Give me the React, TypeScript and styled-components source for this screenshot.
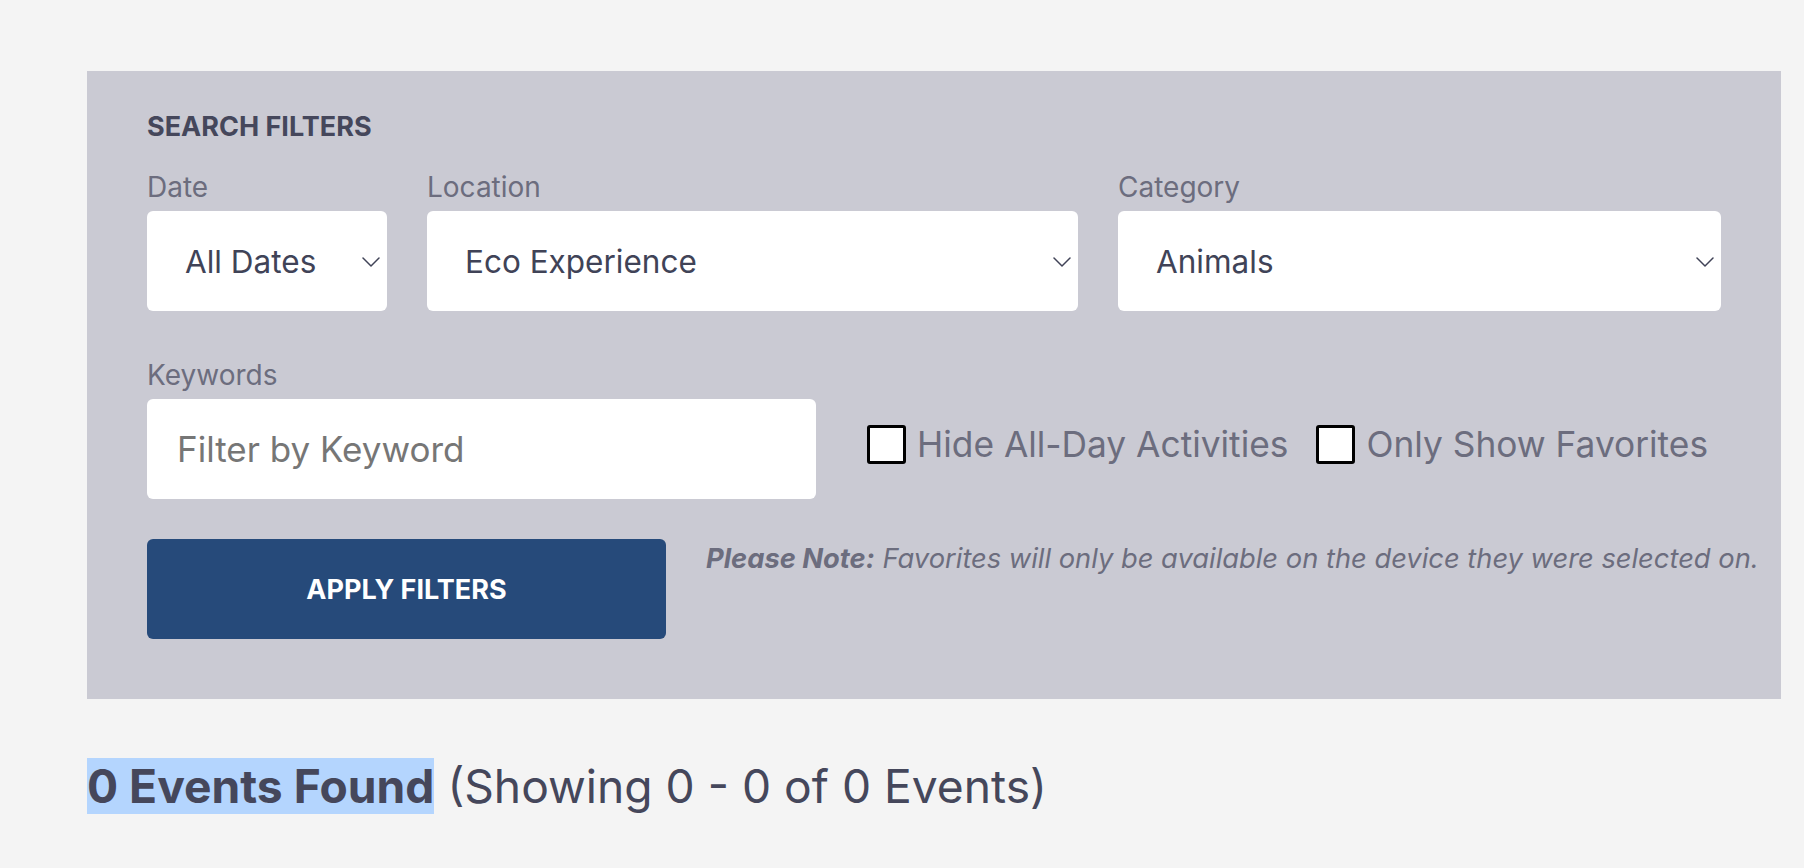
import React from 'react';
import styled, { createGlobalStyle } from 'styled-components';

const GlobalStyle = createGlobalStyle`
  * {
    box-sizing: border-box;
  }

  body {
    margin: 0;
    background: #f4f4f4;
    font-family: 'Inter', 'Liberation Sans', sans-serif;
  }
`;

type SelectProps = {
    label: string;
    value: string;
    options: string[];
};

type CheckProps = {
    label: string;
};

const Chevron = () => (
    <ChevronIcon width="18" height="10" viewBox="0 0 18 10" aria-hidden="true">
        <path d="M1 1 L9 9 L17 1" fill="none" stroke="#404357" strokeWidth="1.5" strokeLinecap="round" strokeLinejoin="round"/>
    </ChevronIcon>
);

const SelectField = ({label, value, options}: SelectProps) => (
    <Field>
        <Label>{label}</Label>
        <SelectWrap>
            <Select defaultValue={value}>
                {options.map((o) => <option key={o}>{o}</option>)}
            </Select>
            <Chevron/>
        </SelectWrap>
    </Field>
);

const CheckOption = ({label}: CheckProps) => (
    <CheckLabel>
        <CheckBox type="checkbox"/>
        <span>{label}</span>
    </CheckLabel>
);

const App = () => {
    return (
        <>
            <GlobalStyle/>
            <Page>
                <FilterPanel>
                    <PanelTitle>SEARCH FILTERS</PanelTitle>
                    <SelectRow>
                        <SelectField label="Date" value="All Dates" options={['All Dates', 'Today', 'This Week']}/>
                        <SelectField label="Location" value="Eco Experience" options={['All Locations', 'Eco Experience']}/>
                        <SelectField label="Category" value="Animals" options={['All Categories', 'Animals']}/>
                    </SelectRow>
                    <KeywordRow>
                        <KeywordField>
                            <Label>Keywords</Label>
                            <TextInput type="text" placeholder="Filter by Keyword"/>
                        </KeywordField>
                        <CheckGroup>
                            <CheckOption label="Hide All-Day Activities"/>
                            <CheckOption label="Only Show Favorites"/>
                        </CheckGroup>
                    </KeywordRow>
                    <ActionRow>
                        <ApplyButton type="button">APPLY FILTERS</ApplyButton>
                        <Note>
                            <strong>Please Note:</strong> Favorites will only be available on the device they were selected on.
                        </Note>
                    </ActionRow>
                </FilterPanel>
                <Results>
                    <Found>0 Events Found</Found> (Showing 0 - 0 of 0 Events)
                </Results>
            </Page>
        </>
    );
};

export default App;

const Page = styled.div`
  padding: 71px 0 40px 87px;
`;

const FilterPanel = styled.section`
  width: 1694px;
  padding: 39px 60px 60px;
  background: #cacad3;
`;

const PanelTitle = styled.h2`
  margin: 0;
  font-size: 27px;
  line-height: 33px;
  font-weight: 700;
  color: #45475b;
`;

const SelectRow = styled.div`
  display: grid;
  grid-template-columns: 240px 651px 1fr;
  column-gap: 40px;
  margin-top: 27px;
`;

const Field = styled.div`
  display: flex;
  flex-direction: column;
`;

const Label = styled.label`
  font-size: 28px;
  line-height: 34px;
  color: #6c6d7e;
  margin-bottom: 7px;
`;

const SelectWrap = styled.div`
  position: relative;
`;

const Select = styled.select`
  appearance: none;
  width: 100%;
  height: 100px;
  padding: 0 40px 0 38px;
  border: none;
  border-radius: 6px;
  background: #fff;
  font-family: 'Inter', 'Liberation Sans', sans-serif;
  font-size: 31.5px;
  color: #404357;
  outline: none;
`;

const ChevronIcon = styled.svg`
  position: absolute;
  right: 7px;
  top: 46px;
  pointer-events: none;
`;

const KeywordRow = styled.div`
  display: flex;
  align-items: flex-end;
  margin-top: 47px;
`;

const KeywordField = styled(Field)`
  width: 669px;
  flex-shrink: 0;
`;

const TextInput = styled.input`
  height: 100px;
  padding: 0 30px;
  border: none;
  border-radius: 6px;
  background: #fff;
  font-family: 'Inter', 'Liberation Sans', sans-serif;
  font-size: 35px;
  color: #404357;
  outline: none;

  &::placeholder {
    color: #767676;
  }
`;

const CheckGroup = styled.div`
  display: flex;
  align-items: center;
  gap: 28px;
  height: 100px;
  padding-bottom: 9px;
  margin-left: 51px;
  white-space: nowrap;
`;

const CheckLabel = styled.label`
  display: flex;
  align-items: center;
  gap: 11px;
  font-size: 35.3px;
  line-height: 44px;
  color: #6c6d7e;
`;

const CheckBox = styled.input`
  appearance: none;
  flex-shrink: 0;
  width: 39px;
  height: 39px;
  margin: 0;
  border: 3.5px solid #000;
  border-radius: 3px;
  background: #fff;
`;

const ActionRow = styled.div`
  display: flex;
  align-items: flex-start;
  gap: 40px;
  margin-top: 40px;
`;

const ApplyButton = styled.button`
  flex-shrink: 0;
  width: 519px;
  height: 100px;
  border: none;
  border-radius: 6px;
  background: #264a7a;
  color: #fff;
  font-family: 'Inter', 'Liberation Sans', sans-serif;
  font-size: 27px;
  font-weight: 700;
  cursor: pointer;
`;

const Note = styled.p`
  margin: 3px 0 0;
  font-size: 27.3px;
  line-height: 33px;
  font-style: italic;
  white-space: nowrap;
  color: #6c6d7e;

  strong {
    font-weight: 700;
  }
`;

const Results = styled.div`
  margin-top: 59px;
  font-size: 46.2px;
  color: #45475b;
`;

const Found = styled.span`
  font-weight: 700;
  background: #b4d5fe;
`;
